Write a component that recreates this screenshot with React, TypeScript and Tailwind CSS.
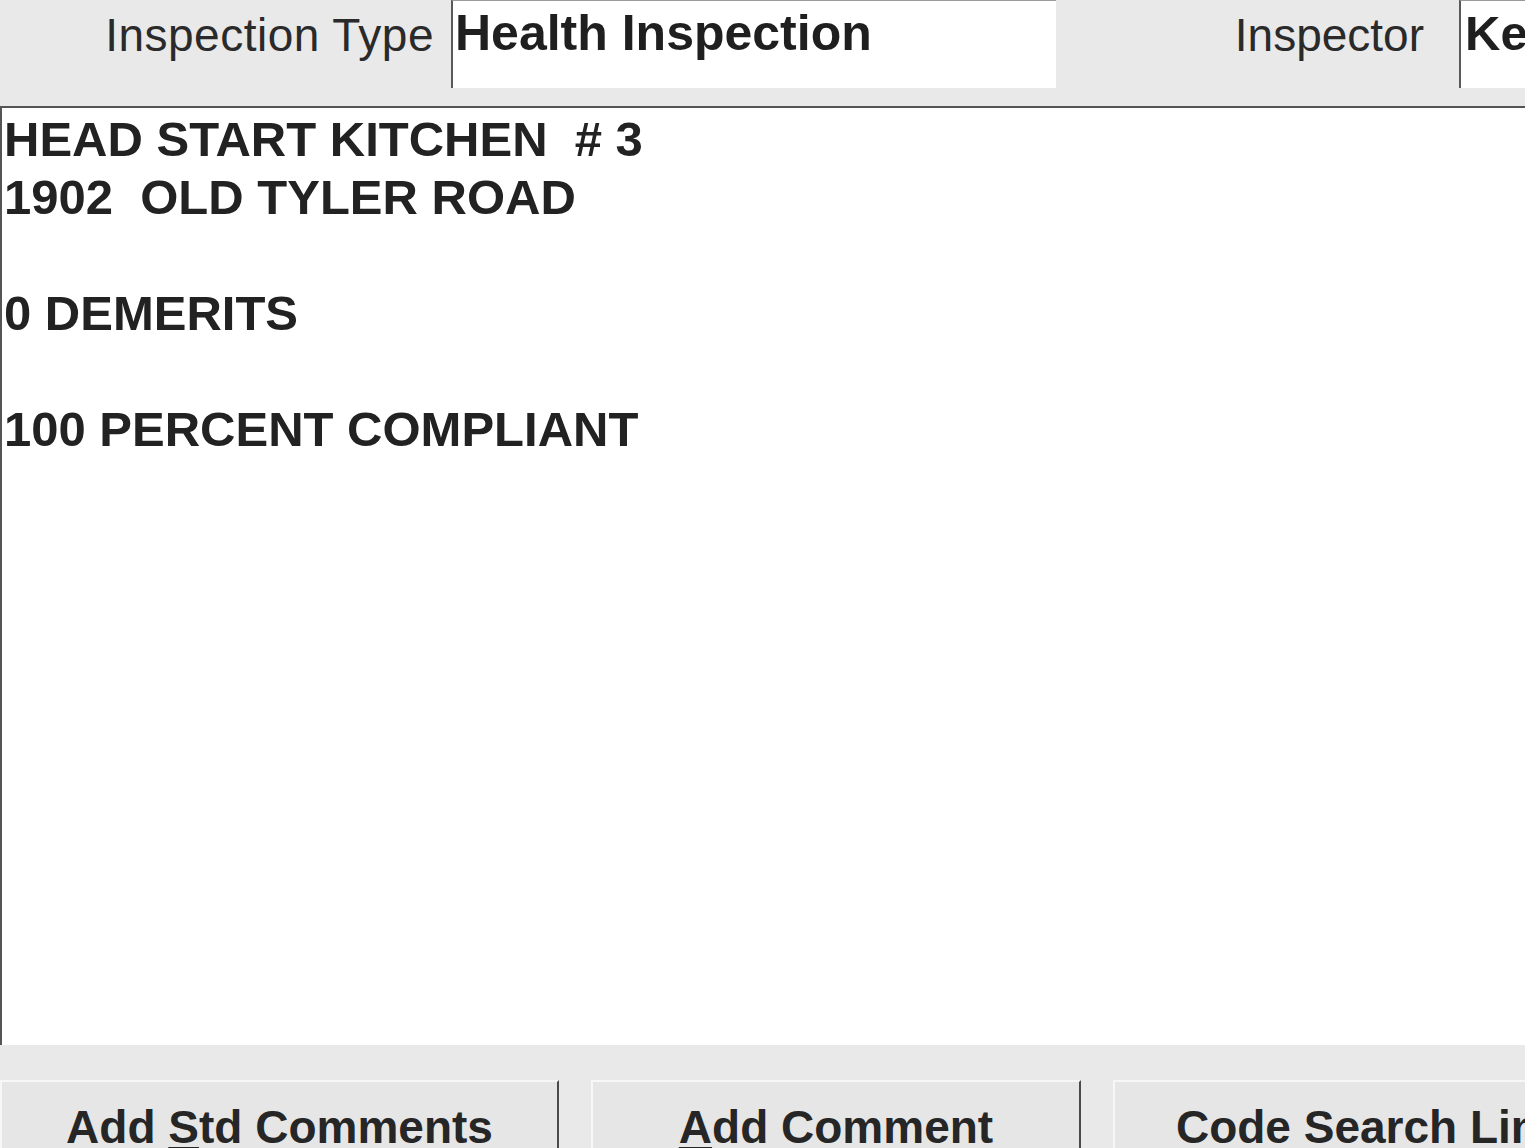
const font = { fontFamily: '"Liberation Sans", Arial, sans-serif' };

// ─── Top bar ──────────────────────────────────────────────────────────────────

function TopBar() {
  return (
    <div className="flex h-[106px] bg-[#e9e9e9]">
      <div className="w-[451px] shrink-0 pr-[17px] pt-[6px] text-right text-[46px] leading-[58px] tracking-[0.5px] text-[#2a2a2a]">
        Inspection Type
      </div>
      <div className="h-[88px] w-[605px] shrink-0 border-l-2 border-t border-l-[#5a5a5a] border-t-[#9a9a9a] bg-white pl-[2px] pt-[3px] text-[50px] font-bold leading-[58px] text-[#1f1f1f]">
        Health Inspection
      </div>
      <div className="flex-1 pr-[35px] pt-[6px] text-right text-[46px] leading-[58px] text-[#2a2a2a]">
        Inspector
      </div>
      <div className="h-[88px] w-[66px] shrink-0 overflow-hidden whitespace-nowrap border-l-2 border-t border-l-[#5a5a5a] border-t-[#9a9a9a] bg-white pl-[4px] pt-[3px] text-[49px] font-bold leading-[58px] text-[#1f1f1f]">
        Kevin
      </div>
    </div>
  );
}

// ─── Comment box ──────────────────────────────────────────────────────────────

const lines = ['HEAD START KITCHEN  # 3', '1902  OLD TYLER ROAD', '', '0 DEMERITS', '', '100 PERCENT COMPLIANT'];

function CommentBox() {
  return (
    <div className="h-[939px] border-l-2 border-t-2 border-[#555] bg-white pl-[2px] pt-[2px] text-[49px] font-bold leading-[58px] text-[#222]">
      {lines.map((line, i) => (
        <div key={i} className="h-[58px] whitespace-pre">
          {line}
        </div>
      ))}
    </div>
  );
}

// ─── Buttons ──────────────────────────────────────────────────────────────────

function Button({ width, children }: { width: string; children: React.ReactNode }) {
  return (
    <div
      className={`${width} h-[80px] shrink-0 whitespace-nowrap border-l-2 border-r-2 border-t-2 border-l-[#f7f7f7] border-r-[#4a4a4a] border-t-[#f7f7f7] bg-[#e6e6e6] pt-[16px] text-center text-[46px] font-bold leading-[58px] text-[#262626]`}
    >
      {children}
    </div>
  );
}

function ButtonRow() {
  return (
    <div className="h-[103px] bg-[#e9e9e9] pt-[35px]">
      <div className="flex gap-[32px]">
        <Button width="w-[559px]">
          Add <span className="underline decoration-2 underline-offset-4">S</span>td Comments
        </Button>
        <Button width="w-[490px]">
          <span className="underline decoration-2 underline-offset-4">A</span>dd Comment
        </Button>
        <Button width="w-[540px]">Code Search Lines</Button>
      </div>
    </div>
  );
}

export default function App() {
  return (
    <div className="h-[1148px] w-[1525px] overflow-hidden bg-[#e9e9e9]" style={font}>
      <TopBar />
      <CommentBox />
      <ButtonRow />
    </div>
  );
}
